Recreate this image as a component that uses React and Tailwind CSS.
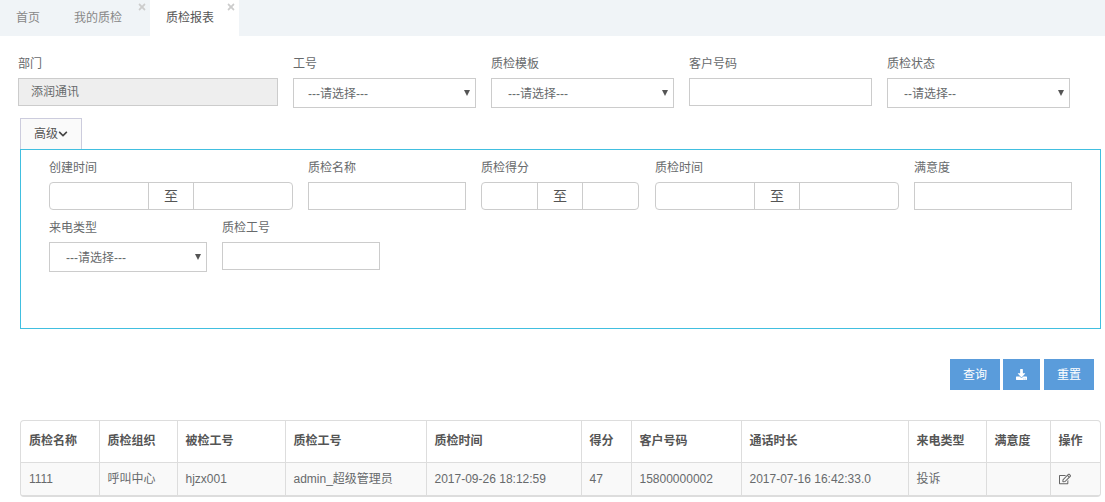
import React from "react";
import { FaChevronDown, FaDownload, FaRegEdit, FaTimes } from "react-icons/fa";

const labelClass = "block h-6 text-xs leading-[20px] text-[#676a6c]";
const inputClass = "block w-full h-7 border border-[#ccc] bg-white outline-none text-xs";

const Field = ({ label, width, children }) => (
  <div className={width}>
    <label className={labelClass}>{label}</label>
    {children}
  </div>
);

const Select = ({ text, indent }) => (
  <div className="relative">
    <select className={`block w-full h-[30px] appearance-none border border-[#ccc] bg-white text-xs text-[#676a6c] pt-[2px] outline-none ${indent}`}>
      <option>{text}</option>
    </select>
    <span className="absolute right-[6px] top-[12px] w-0 h-0 border-x-[3px] border-x-transparent border-t-[6px] border-t-[#555]" />
  </div>
);

const RangeInput = ({ left, right }) => (
  <div className="flex h-7 rounded border border-[#ccc] overflow-hidden">
    <input className={`${left} h-full outline-none`} />
    <span className="w-[46px] shrink-0 flex items-center justify-center border-x border-[#ccc] bg-white text-sm text-[#555]">至</span>
    <input className={`${right} h-full outline-none flex-1 min-w-0`} />
  </div>
);

const Tab = ({ name, width, active, closable }) => (
  <div className={`relative h-full flex items-center pl-4 text-xs ${width} ${active ? "bg-white text-[#555]" : "text-[#888]"}`}>
    {name}
    {closable && <FaTimes className="absolute right-[3px] top-[2px] text-[10px] text-[#ccc]" />}
  </div>
);

const columns = [
  { name: "质检名称", w: "w-[78px]", v: "1111" },
  { name: "质检组织", w: "w-[78px]", v: "呼叫中心" },
  { name: "被检工号", w: "w-[108px]", v: "hjzx001" },
  { name: "质检工号", w: "w-[141px]", v: "admin_超级管理员" },
  { name: "质检时间", w: "w-[155px]", v: "2017-09-26 18:12:59" },
  { name: "得分", w: "w-[50px]", v: "47" },
  { name: "客户号码", w: "w-[110px]", v: "15800000002" },
  { name: "通话时长", w: "w-[167px]", v: "2017-07-16 16:42:33.0" },
  { name: "来电类型", w: "w-[78px]", v: "投诉" },
  { name: "满意度", w: "w-[64px]", v: "" },
  { name: "操作", w: "w-[52px]", v: <FaRegEdit className="text-[12px] text-[#666]" /> },
];

export default function App() {
  return (
    <div className="w-[1105px] h-[502px] overflow-hidden bg-white font-['Liberation_Sans','Noto_Sans_CJK_SC',sans-serif] text-[#676a6c]">
      {/* Tabs */}
      <div className="flex h-9 bg-[#f0f4f7]">
        <Tab name="首页" width="w-[58px]" />
        <Tab name="我的质检" width="w-[92px]" closable />
        <Tab name="质检报表" width="w-[89px]" active closable />
      </div>

      {/* Basic filters */}
      <div className="flex items-start gap-[15px] pl-[18px] pt-[18px]">
        <Field label="部门" width="w-[260px]">
          <div className="h-7 flex items-center pl-3 border border-[#ccc] bg-[#eee] text-xs text-[#676a6c]">添润通讯</div>
        </Field>
        <Field label="工号" width="w-[183px]"><Select text="---请选择---" indent="pl-[14px]" /></Field>
        <Field label="质检模板" width="w-[183px]"><Select text="---请选择---" indent="pl-[16px]" /></Field>
        <Field label="客户号码" width="w-[183px]"><input className={inputClass} /></Field>
        <Field label="质检状态" width="w-[183px]"><Select text="--请选择--" indent="pl-[16px]" /></Field>
      </div>

      <button className="ml-5 mt-[10px] w-[62px] h-[31px] flex items-center justify-center border border-b-0 border-[#ccd] bg-[#fafafa] text-xs text-[#555]">
        高级<FaChevronDown className="text-[10px] text-[#444]" />
      </button>

      {/* Advanced filters */}
      <div className="ml-5 w-[1081px] h-[180px] border border-[#41bfe0] pl-[28px] pt-[8px]">
        <div className="flex gap-[15px]">
          <Field label="创建时间" width="w-[244px]"><RangeInput left="w-[98px]" /></Field>
          <Field label="质检名称" width="w-[158px]"><input className={inputClass} /></Field>
          <Field label="质检得分" width="w-[158px]"><RangeInput left="w-[55px]" /></Field>
          <Field label="质检时间" width="ml-px w-[244px]"><RangeInput left="w-[98px]" /></Field>
          <Field label="满意度" width="w-[158px]"><input className={inputClass} /></Field>
        </div>
        <div className="flex items-start gap-[15px] mt-2">
          <Field label="来电类型" width="w-[158px]"><Select text="---请选择---" indent="pl-[16px]" /></Field>
          <Field label="质检工号" width="w-[158px]"><input className={inputClass} /></Field>
        </div>
      </div>

      {/* Actions */}
      <div className="flex justify-end mt-[30px] pr-[11px] text-xs text-white">
        <button className="w-[50px] h-[31px] bg-[#5a9cdb]">查询</button>
        <button className="ml-[3px] w-[37px] h-[31px] bg-[#5a9cdb] flex items-center justify-center"><FaDownload className="text-[11px]" /></button>
        <button className="ml-[4px] w-[50px] h-[31px] bg-[#5a9cdb]">重置</button>
      </div>

      {/* Result table */}
      <div className="ml-5 mt-[30px] w-[1081px] rounded border border-[#ddd] border-b-2 overflow-hidden">
        <table className="w-full table-fixed border-collapse text-xs text-[#676a6c]">
          <colgroup>
            {columns.map((c) => <col key={c.name} className={c.w} />)}
          </colgroup>
          <thead>
            <tr className="h-[41px] border-b border-[#ddd]">
              {columns.map((c) => (
                <th key={c.name} className="border-l first:border-l-0 border-[#ddd] pl-2 text-left font-bold text-[#555]">{c.name}</th>
              ))}
            </tr>
          </thead>
          <tbody>
            <tr className="h-[33px] bg-[#f9f9f9]">
              {columns.map((c) => (
                <td key={c.name} className="border-l first:border-l-0 border-[#ddd] pl-2 whitespace-nowrap">{c.v}</td>
              ))}
            </tr>
          </tbody>
        </table>
      </div>
    </div>
  );
}
